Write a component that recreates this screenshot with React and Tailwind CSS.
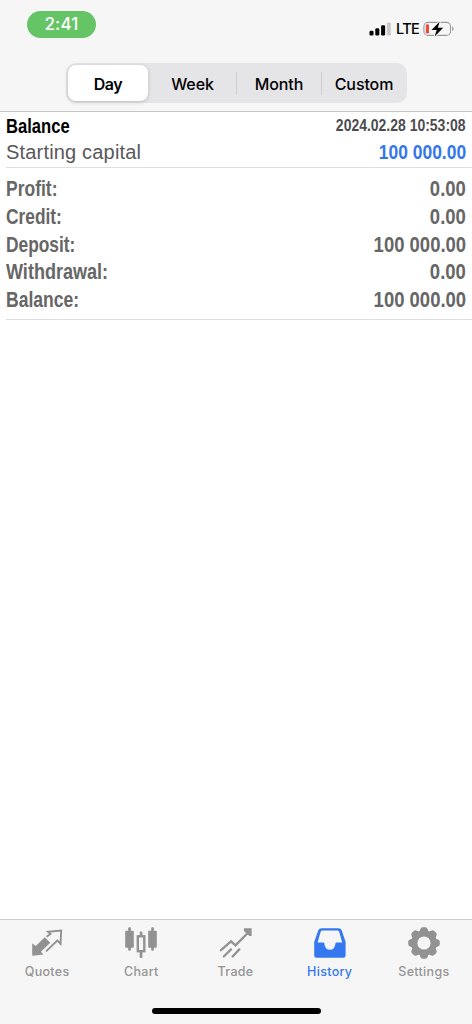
import React from "react";

const narrow = "font-['Liberation_Sans',sans-serif] font-bold";

const totals = [
  ["Profit:", "0.00", "scale-x-[0.795]"],
  ["Credit:", "0.00", "scale-x-[0.788]"],
  ["Deposit:", "100 000.00", "scale-x-[0.788]"],
  ["Withdrawal:", "0.00", "scale-x-[0.82]"],
  ["Balance:", "100 000.00", "scale-x-[0.797]"],
];

function Signal() {
  return (
    <svg width="22" height="14" viewBox="0 0 22 14">
      <rect x="0.5" y="8.800" width="4" height="4.600" rx="1.200" fill="#000" />
      <rect x="6.300" y="6.200" width="4" height="7.200" rx="1.200" fill="#000" />
      <rect x="12.100" y="3.200" width="4" height="10.200" rx="1.200" fill="#000" />
      <rect x="17.800" y="0.400" width="4" height="13" rx="1.200" fill="#c9c9c9" />
    </svg>
  );
}

function Battery() {
  return (
    <svg width="32" height="16" viewBox="0 0 32 16">
      <rect x="0.9" y="1.4" width="26.6" height="13" rx="4" fill="none" stroke="#9b9b9b" strokeWidth="1.1" />
      <path d="M29.2 5.6c1.9.7 1.9 4 0 4.700z" fill="#9b9b9b" />
      <rect x="2.8" y="3.3" width="3.2" height="9.300" rx="1.300" fill="#eb4d3d" />
      <path d="M16.7 0.5L8.6 9.1h5.1L11.6 15.5l8.6-8.800h-5.300z" fill="#000" stroke="#f6f6f6" strokeWidth="2" paintOrder="stroke" strokeLinejoin="round" />
    </svg>
  );
}

function QuotesIcon() {
  return (
    <svg width="34" height="34" viewBox="0 0 34 34">
      <path d="M2.200 17.200 5.700 19.900 14.800 11.200 20.300 16.800 10.900 25.700 13.500 28.500 2.200 29.700z" fill="#929292" />
      <path d="M16.500 10.700 20.500 8 18 5.700 31.200 4.600 30.600 17.800 27.300 14.600 16 25.400" fill="none" stroke="#929292" strokeWidth="1.900" />
    </svg>
  );
}

function ChartIcon() {
  return (
    <svg width="34" height="34" viewBox="0 0 34 34">
      <g fill="#929292">
        <rect x="1.200" y="4.800" width="8.600" height="17" rx="1" />
        <rect x="4.200" y="1.200" width="2.700" height="23.600" rx="1" />
        <rect x="24.200" y="4.800" width="8.600" height="17" rx="1" />
        <rect x="27.200" y="1.200" width="2.700" height="23.600" rx="1" />
        <rect x="15.700" y="5.500" width="2.700" height="5" rx="1" />
        <rect x="15.700" y="25" width="2.700" height="7" rx="1" />
      </g>
      <rect x="13.800" y="10.300" width="6.500" height="14.900" fill="none" stroke="#929292" strokeWidth="2.400" />
    </svg>
  );
}

function TradeIcon() {
  return (
    <svg width="34" height="34" viewBox="0 0 34 34">
      <g fill="none" stroke="#929292" strokeWidth="2.300" strokeLinecap="round">
        <path d="M2 24.200 12 15.300 16.500 19.300 30 5.700" />
        <path d="M4.800 30.500 12 23.400M13.600 30.500 20.300 23.400" />
      </g>
      <path d="M24.900 2.200h7.700v7.800h-2.200L24.900 4.900z" fill="#929292" />
    </svg>
  );
}

function HistoryIcon() {
  return (
    <svg width="34" height="34" viewBox="0 0 34 34">
      <path fillRule="evenodd" d="M8.500 2.200H25.500Q28 2.200 28.700 4.200L32.600 16V29.300Q32.600 31.800 30.100 31.800H3.700Q1.200 31.800 1.200 29.300V16L5.300 4.200Q6 2.200 8.500 2.200ZM9.500 4.600Q8 4.600 7.600 6L4.600 16.400H10.300Q11.200 16.400 11.400 17.700Q12 23.700 16.900 23.700T22.400 17.700Q22.600 16.400 23.500 16.400H29.200L26.200 6Q25.800 4.600 24.300 4.600Z" fill="#3478f0" />
    </svg>
  );
}

const teeth = [0, 45, 90, 135, 180, 225, 270, 315];

function SettingsIcon() {
  return (
    <svg width="34" height="34" viewBox="0 0 34 34">
      <g fill="#929292">
        {teeth.map((a) => (
          <path key={a} transform={`rotate(${a} 17 17)`} d="M12 7 13.200 3.500Q13.800 1.200 15.700 1.200H18.300Q20.200 1.200 20.800 3.500L22 7z" />
        ))}
      </g>
      <circle cx="17" cy="17" r="9.700" fill="none" stroke="#929292" strokeWidth="6.200" />
    </svg>
  );
}

const tabs = [
  ["Quotes", QuotesIcon],
  ["Chart", ChartIcon],
  ["Trade", TradeIcon],
  ["History", HistoryIcon],
  ["Settings", SettingsIcon],
];

export default function App() {
  return (
    <div className="flex h-[1024px] w-[472px] flex-col overflow-hidden bg-white font-['Inter','Liberation_Sans',sans-serif]">
      <header className="flex h-[112px] shrink-0 flex-col border-b border-[#c4c4c6] bg-[#f6f6f6]">
        <div className="flex h-[63px] items-start justify-between pt-[11px] pr-[17px] pl-[27px]">
          <div className="flex h-[27px] w-[69px] items-center justify-center rounded-full bg-[#65c466] pt-px text-[17px] font-medium tracking-[0.2px] text-white">
            2:41
          </div>
          <div className="flex items-center pt-[9px]">
            <Signal />
            <span className="ml-[5px] w-[27px] pt-px text-[14.5px] leading-[16px] font-medium tracking-[-0.7px]">LTE</span>
            <Battery />
          </div>
        </div>
        <div className="ml-[66px] flex h-[40px] w-[341px] items-center rounded-[10px] bg-[#e5e5e8] p-[2px] text-[16px] text-black">
          <div className="flex h-[36px] w-[80px] items-center justify-center rounded-[8px] bg-white pt-px font-semibold tracking-[-0.4px] shadow-[0_1px_4px_rgba(0,0,0,0.18)]">Day</div>
          <div className="flex h-[23px] w-[89px] items-center justify-center border-r border-[#cfcfd3] pt-px pl-px font-medium tracking-[-0.1px]">Week</div>
          <div className="flex h-[23px] w-[85px] items-center justify-center border-r border-[#cfcfd3] pt-px font-medium tracking-[-0.1px]">Month</div>
          <div className="flex h-[23px] flex-1 items-center justify-center pt-px pl-px font-medium tracking-[-0.1px]">Custom</div>
        </div>
      </header>

      <main className="flex-1">
        <div className="ml-[6px] h-[56px] border-b border-[#dedee2] pr-[6px]">
          <div className={`flex h-[27px] items-center justify-between ${narrow}`}>
            <span className="origin-left scale-x-[0.83] text-[20px] text-black">Balance</span>
            <span className="origin-right scale-x-[0.873] text-[16px] text-[#4c4c50]">2024.02.28 10:53:08</span>
          </div>
          <div className="flex h-[26px] items-center justify-between">
            <span className="font-['Liberation_Sans',sans-serif] text-[20px] tracking-[0.18px] text-[#58585c]">Starting capital</span>
            <span className={`origin-right scale-x-[0.83] text-[21px] text-[#3478e8] ${narrow}`}>100 000.00</span>
          </div>
        </div>
        <div className={`ml-[6px] h-[152px] border-b border-[#dedee2] pt-[7px] pr-[6px] text-[22px] text-[#666666] ${narrow}`}>
          {totals.map(([label, value, scale]) => (
            <div key={label} className="flex h-[27.7px] items-center justify-between">
              <span className={`origin-left ${scale}`}>{label}</span>
              <span className="origin-right scale-x-[0.84]">{value}</span>
            </div>
          ))}
        </div>
      </main>

      <nav className="flex h-[105px] shrink-0 flex-col border-t border-[#cfcfd1] bg-[#f6f6f6]">
        <div className="flex h-[88px] pt-[6px] pr-px">
          {tabs.map(([label, Icon]) => (
            <div
              key={label}
              className={`flex flex-1 flex-col items-center text-[12.5px] leading-[16px] font-medium tracking-[0.3px] ${label === "History" ? "text-[#3478f0]" : "text-[#959595]"}`}
            >
              <Icon />
              <span className="mt-[4px]">{label}</span>
            </div>
          ))}
        </div>
        <div className="mx-auto h-[6px] w-[169px] rounded-full bg-black" />
      </nav>
    </div>
  );
}
